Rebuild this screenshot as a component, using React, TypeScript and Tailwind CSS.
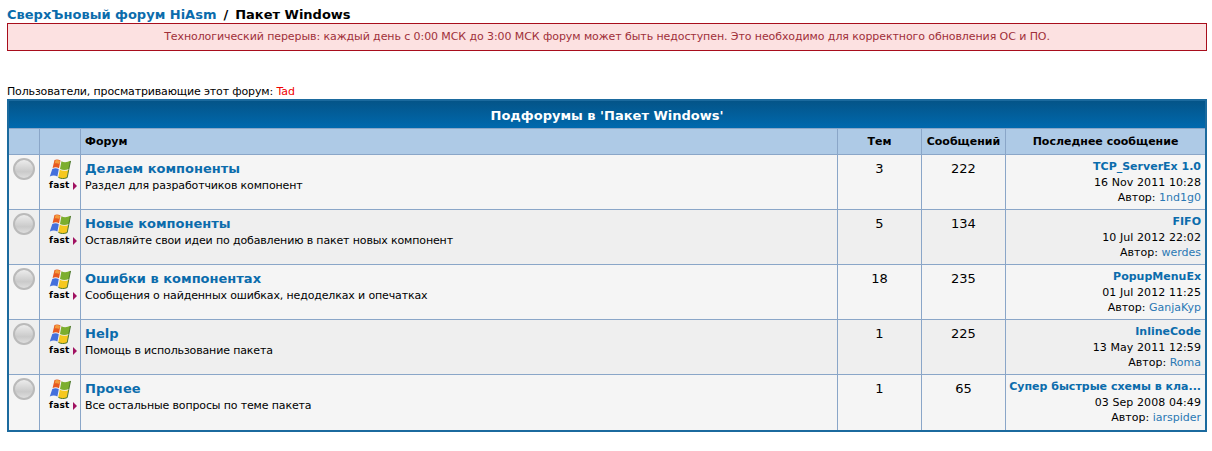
const rows = [
  { title: "Делаем компоненты", desc: "Раздел для разработчиков компонент", topics: 3, posts: 222, last: "TCP_ServerEx 1.0", date: "16 Nov 2011 10:28", author: "1nd1g0" },
  { title: "Новые компоненты", desc: "Оставляйте свои идеи по добавлению в пакет новых компонент", topics: 5, posts: 134, last: "FIFO", date: "10 Jul 2012 22:02", author: "werdes" },
  { title: "Ошибки в компонентах", desc: "Сообщения о найденных ошибках, недоделках и опечатках", topics: 18, posts: 235, last: "PopupMenuEx", date: "01 Jul 2012 11:25", author: "GanjaKyp" },
  { title: "Help", desc: "Помощь в использование пакета", topics: 1, posts: 225, last: "InlineCode", date: "13 May 2011 12:59", author: "Roma" },
  { title: "Прочее", desc: "Все остальные вопросы по теме пакета", topics: 1, posts: 65, last: "Супер быстрые схемы в кла...", date: "03 Sep 2008 04:49", author: "iarspider" },
];

function WinLogo() {
  return (
    <svg width="22" height="20" viewBox="0 0 22 20" className="block">
      <path d="M5.5 1 C7.5 0 9.5 0.3 11.5 1.6 L10 9.2 C8 8 6 7.9 3.6 9 Z" fill="#e8581f" />
      <path d="M6.5 1.2 C8 0.8 9.5 1 11 2 L10.4 5 C8.8 4.2 7 4.1 5.6 4.6 Z" fill="#f29a3c" />
      <path d="M12.4 2.2 C15 3.6 18 3.4 21.5 1.8 L19.8 10 C16.5 11.3 13.6 11.2 11 9.9 Z" fill="#7cae2e" />
      <path d="M3.3 9.9 C5.6 8.9 7.8 8.9 9.8 10.2 L8.4 17.4 C6 16.2 3.5 16.2 0.8 17.4 Z" fill="#4470dc" />
      <path d="M10.8 10.8 C13.4 12.1 16.4 12.1 19.6 10.9 L18 18.6 C14.8 19.9 12 19.7 9.3 18.2 Z" fill="#f6c81e" />
      <path d="M21.5 2 L19.8 10.4 L18.2 18.6 C15 20 12 19.8 9.4 18.4" fill="none" stroke="#3c6a1c" strokeWidth="0.9" />
    </svg>
  );
}

function Row({ r, alt }: { r: (typeof rows)[number]; alt: boolean }) {
  const bg = alt ? "bg-[#efefef]" : "bg-[#f5f5f5]";
  return (
    <div className={`flex h-[55px] border-b border-[#8aa6c8] last:border-b-0 ${bg}`}>
      <div className="w-[31px] shrink-0 border-r border-[#8aa6c8] pl-[4px] pt-[3px]">
        <div className="h-[22px] w-[22px] rounded-full border-2 border-[#bababa] bg-[linear-gradient(180deg,#ececec,#cacaca_65%,#dedede)]" />
      </div>
      <div className="w-[41px] shrink-0 border-r border-[#8aa6c8] pl-[8px] pt-[4px]">
        <div className="pl-[1px]"><WinLogo /></div>
        <div className="mt-[1px] flex h-[11px] items-center pl-[1px] text-[9px] leading-[11px] font-bold tracking-[0.25px] text-black">
          fast
          <svg width="4" height="8" viewBox="0 0 4 8" className="ml-[3px]"><path d="M0 0 L4 4 L0 8 Z" fill="#a01060" /></svg>
        </div>
      </div>
      <div className="w-[757px] shrink-0 border-r border-[#8aa6c8] pl-[4px] pt-[6px]">
        <div className="h-[16px] text-[13px] leading-[16px] font-bold text-[#0b6cac]">{r.title}</div>
        <div className="mt-[1px] text-[11px] leading-[15px] tracking-[-0.14px] text-black">{r.desc}</div>
      </div>
      <div className="w-[84px] shrink-0 border-r border-[#8aa6c8] pt-[6px] text-center text-[13px] leading-[15px] text-black">{r.topics}</div>
      <div className="w-[84px] shrink-0 border-r border-[#8aa6c8] pt-[6px] text-center text-[13px] leading-[15px] text-black">{r.posts}</div>
      <div className="flex-1 pr-[4px] pt-[4px] text-right text-[11px] leading-[15.5px] text-black">
        <div className="font-bold text-[#0b6cac]">{r.last}</div>
        <div className="tracking-[0.08px]">{r.date}</div>
        <div>Автор: <span className="text-[#2a78b4]">{r.author}</span></div>
      </div>
    </div>
  );
}

export default function App() {
  return (
    <div className="h-[451px] bg-white pl-[7px] pr-[5px] pt-[7px] font-['DejaVu_Sans','Noto_Sans',sans-serif] text-[11px] text-black">
      <div className="flex h-[16px] text-[13px] leading-[16px] font-bold">
        <span className="text-[#0b6cac]">СверхЪновый форум HiAsm</span>
        <span className="ml-[7px]">/</span>
        <span className="ml-[7px]">Пакет Windows</span>
      </div>
      <div className="flex h-[28px] items-center justify-center border border-[#a80d1c] bg-[#fce1e1] pt-[1px] text-[11px] tracking-[-0.085px] text-[#a0303a]">
        Технологический перерыв: каждый день с 0:00 МСК до 3:00 МСК форум может быть недоступен. Это необходимо для корректного обновления ОС и ПО.
      </div>
      <div className="mt-[33px] h-[15px] text-[11px] leading-[15px] tracking-[-0.15px]">
        Пользователи, просматривающие этот форум: <span className="tracking-normal text-[#f00000]">Tad</span>
      </div>
      <div className="border-2 border-[#1b6a9e]">
        <div className="flex h-[27px] items-center justify-center bg-[linear-gradient(180deg,#045488,#0069ae)] pt-[2px] text-[13px] font-bold text-white">
          Подфорумы в 'Пакет Windows'
        </div>
        <div className="flex h-[27px] border-y border-[#8aa6c8] bg-[#aecae6] text-[11px] font-bold text-black">
          <div className="w-[31px] shrink-0 border-r border-[#8aa6c8]" />
          <div className="w-[41px] shrink-0 border-r border-[#8aa6c8]" />
          <div className="flex w-[757px] shrink-0 items-center border-r border-[#8aa6c8] pl-[4px] pt-[1px]">Форум</div>
          <div className="flex w-[84px] shrink-0 items-center justify-center border-r border-[#8aa6c8] pt-[1px]">Тем</div>
          <div className="flex w-[84px] shrink-0 items-center justify-center border-r border-[#8aa6c8] pt-[1px]">Сообщений</div>
          <div className="flex flex-1 items-center justify-center pt-[1px]">Последнее сообщение</div>
        </div>
        {rows.map((r, i) => (
          <Row key={r.title} r={r} alt={i % 2 === 1} />
        ))}
      </div>
    </div>
  );
}
